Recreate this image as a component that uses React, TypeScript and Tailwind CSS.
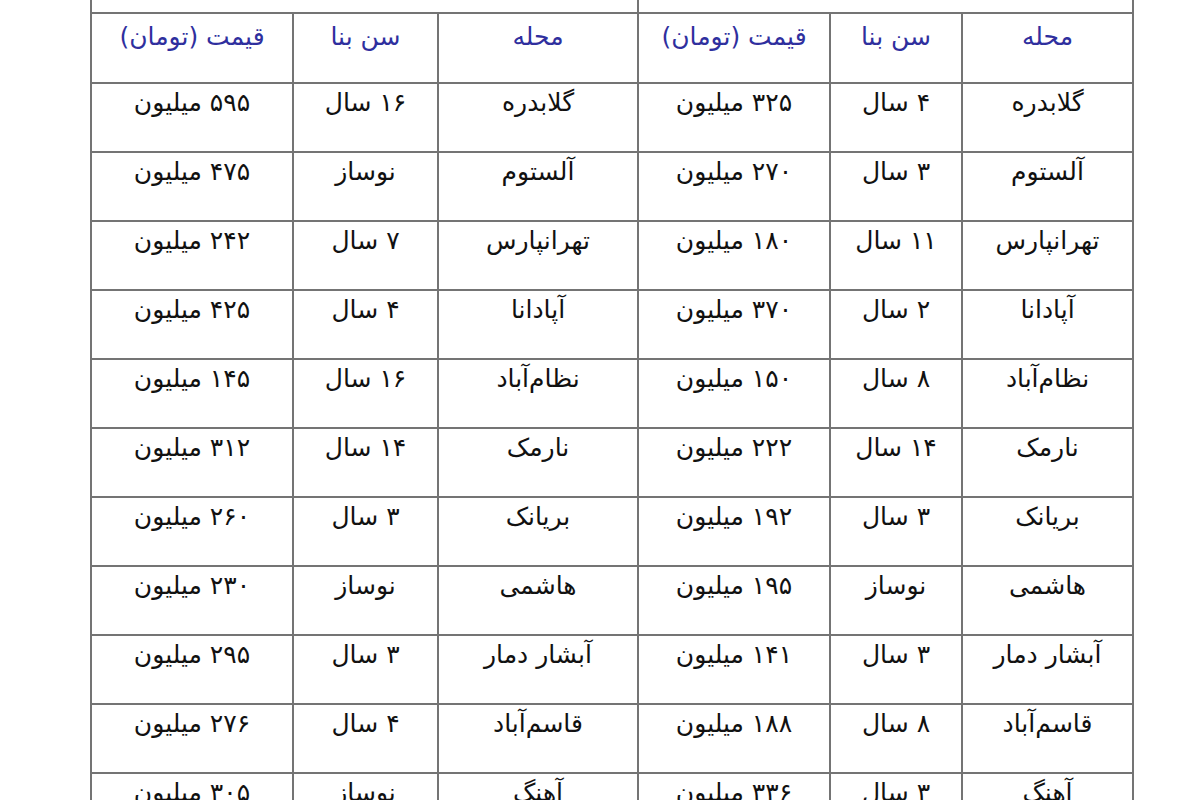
const headers = ["محله", "سن بنا", "قیمت (تومان)"];

type Side = [string, string, string];

const rows: [Side, Side][] = [
  [["گلابدره", "۴ سال", "۳۲۵ میلیون"], ["گلابدره", "۱۶ سال", "۵۹۵ میلیون"]],
  [["آلستوم", "۳ سال", "۲۷۰ میلیون"], ["آلستوم", "نوساز", "۴۷۵ میلیون"]],
  [["تهرانپارس", "۱۱ سال", "۱۸۰ میلیون"], ["تهرانپارس", "۷ سال", "۲۴۲ میلیون"]],
  [["آپادانا", "۲ سال", "۳۷۰ میلیون"], ["آپادانا", "۴ سال", "۴۲۵ میلیون"]],
  [["نظام‌آباد", "۸ سال", "۱۵۰ میلیون"], ["نظام‌آباد", "۱۶ سال", "۱۴۵ میلیون"]],
  [["نارمک", "۱۴ سال", "۲۲۲ میلیون"], ["نارمک", "۱۴ سال", "۳۱۲ میلیون"]],
  [["بریانک", "۳ سال", "۱۹۲ میلیون"], ["بریانک", "۳ سال", "۲۶۰ میلیون"]],
  [["هاشمی", "نوساز", "۱۹۵ میلیون"], ["هاشمی", "نوساز", "۲۳۰ میلیون"]],
  [["آبشار دمار", "۳ سال", "۱۴۱ میلیون"], ["آبشار دمار", "۳ سال", "۲۹۵ میلیون"]],
  [["قاسم‌آباد", "۸ سال", "۱۸۸ میلیون"], ["قاسم‌آباد", "۴ سال", "۲۷۶ میلیون"]],
  [["آهنگ", "۳ سال", "۳۳۶ میلیون"], ["آهنگ", "نوساز", "۳۰۵ میلیون"]],
];

function Cell({ text, head }: { text: string; head?: boolean }) {
  return (
    <div
      className={`flex justify-center bg-white text-[25px] leading-[32px] ${
        head ? "h-[68px] pt-[7px] text-[#2f2f9e]" : "h-[67px] pt-[3px] text-[#111]"
      }`}
    >
      {text}
    </div>
  );
}

export default function App() {
  return (
    <div className="h-[800px] w-[1200px] overflow-hidden bg-white">
      <div
        dir="rtl"
        className="ml-[90px] grid w-[1044px] grid-cols-[169px_130px_190px_198px_143px_200px] gap-[2px] bg-[#747474] px-[2px] pb-[2px]"
        style={{ fontFamily: '"DejaVu Sans", sans-serif' }}
      >
        <div className="col-span-3 h-[12px] bg-white" />
        <div className="col-span-3 h-[12px] bg-white" />

        {[...headers, ...headers].map((h, i) => (
          <Cell key={`h${i}`} text={h} head />
        ))}

        {rows.map(([right, left], r) =>
          [...right, ...left].map((t, c) => <Cell key={`${r}-${c}`} text={t} />)
        )}
      </div>
    </div>
  );
}
